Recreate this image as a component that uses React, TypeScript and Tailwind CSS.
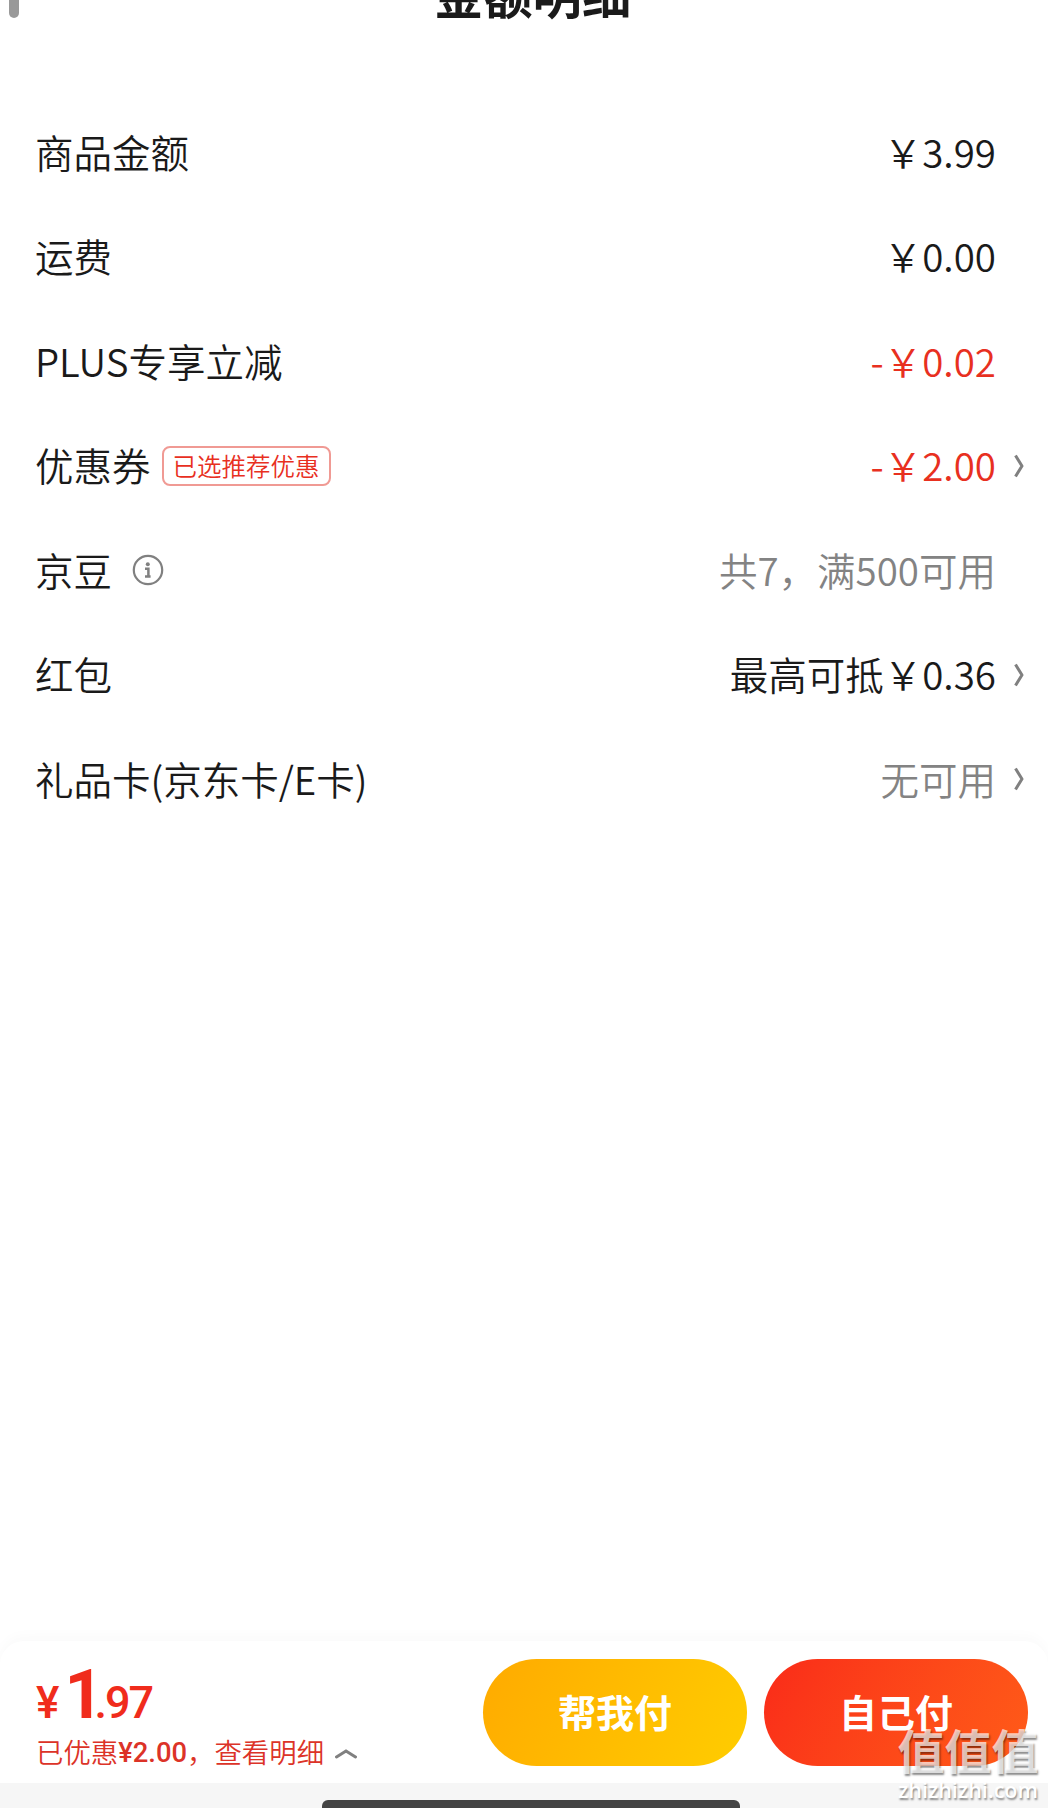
import type { ReactNode } from 'react'

type Row = {
  label: string
  value: string
  tone?: 'dark' | 'red' | 'gray'
  extra?: ReactNode
  arrow?: boolean
}

const tones = {
  dark: 'text-[#1a1a1a]',
  red: 'text-[#e8301f]',
  gray: 'text-[#838383]',
}

// \uFFE5 is the full-width yen sign, \uFF0C the full-width comma
const rows: Row[] = [
  { label: '商品金额', value: '\uFFE53.99' },
  { label: '运费', value: '\uFFE50.00' },
  { label: 'PLUS专享立减', value: '-\uFFE50.02', tone: 'red' },
  { label: '优惠券', value: '-\uFFE52.00', tone: 'red', extra: <CouponTag />, arrow: true },
  { label: '京豆', value: '共7\uFF0C满500可用', tone: 'gray', extra: <InfoIcon /> },
  { label: '红包', value: '最高可抵\uFFE50.36', arrow: true },
  { label: '礼品卡(京东卡/E卡)', value: '无可用', tone: 'gray', arrow: true },
]

function CouponTag() {
  return (
    <span className="ml-[11px] flex h-10 w-[169px] items-center justify-center rounded-lg border-2 border-[#f09a94] text-[24.5px] leading-none text-[#e8301f]">
      已选推荐优惠
    </span>
  )
}

function InfoIcon() {
  return (
    <svg className="ml-5 size-8" viewBox="0 0 32 32" fill="none" stroke="#808080">
      <circle cx="16" cy="16" r="14.2" strokeWidth="2.2" />
      <circle cx="15.8" cy="10.2" r="2" fill="#808080" stroke="none" />
      <path d="M13 14.8h3.4v7.8M13 22.6h5.6" strokeWidth="2.5" />
    </svg>
  )
}

function ArrowRight() {
  return (
    <svg className="h-6 w-3" viewBox="0 0 12 24" fill="none" stroke="#808080" strokeWidth="3">
      <path d="M2.5 1.5l6.5 10.5-6.5 10.5" strokeLinejoin="round" />
    </svg>
  )
}

function DetailRow({ label, value, tone = 'dark', extra, arrow }: Row) {
  return (
    <li className="flex h-[104.5px] items-center text-[38.5px] leading-none font-[350]">
      <span className="pb-[3px] text-[#1a1a1a]">{label}</span>
      {extra}
      <span className={`ml-auto pb-[3px] ${tones[tone]}`}>{value}</span>
      <span className="flex w-[29px] justify-end">{arrow && <ArrowRight />}</span>
    </li>
  )
}

export default function App() {
  return (
    <div className="relative flex h-[1808px] w-[1048px] flex-col overflow-hidden bg-white font-['Noto_Sans_CJK_SC',sans-serif]">
      <header className="flex h-[100px] shrink-0 items-start pl-[9px]">
        <span className="h-[18px] w-2.5 rounded-b-full bg-[#999]" />
        <h1 className="-mt-[32px] ml-[415px] text-[49.3px] font-bold leading-none text-[#1a1a1a]">金额明细</h1>
      </header>

      <ul className="flex-1 pl-[35px] pr-[23px]">
        {rows.map((row) => (
          <DetailRow key={row.label} {...row} />
        ))}
      </ul>

      <footer className="shrink-0">
        <div className="flex h-[142px] rounded-t-3xl bg-white pl-9 pr-5 pt-[18px] shadow-[0_-6px_12px_rgba(0,0,0,0.02)]">
          <div className="w-[447px] text-[#f02c1c]">
            <div className="flex h-[70px] items-baseline font-['Roboto',sans-serif] font-bold">
              <span className="text-[44px] font-medium leading-none">¥</span>
              <span className="ml-[5px] text-[68px] leading-[72px] tracking-[-9px]">1</span>
              <span className="text-[45px] font-medium leading-none tracking-[-2px]">.97</span>
            </div>
            <div className="flex items-center text-[27.4px] leading-[44px] text-[#dc3328]">
              <span className="font-[350]">已优惠</span>
              <span className="pt-1 font-['Roboto',sans-serif] leading-[40px] font-medium">¥2.00</span>
              <span className="font-[350]">{'\uFF0C查看明细'}</span>
              <svg className="mt-1.5 ml-[11px] h-3 w-[22px]" viewBox="0 0 22 12" fill="none" stroke="#808080" strokeWidth="3">
                <path d="M1.5 9l9.5-6 9.5 6" strokeLinecap="round" />
              </svg>
            </div>
          </div>
          <button className="h-[107px] w-[264px] rounded-full bg-linear-120 from-[#ffaa00] to-[#ffcd00] pb-1 text-[38px] font-bold text-white">
            帮我付
          </button>
          <button className="ml-[17px] h-[107px] w-[264px] rounded-full bg-linear-120 from-[#fa2a19] to-[#ff5b18] pb-1 text-[38px] font-bold text-white">
            自己付
          </button>
        </div>
        <div className="flex h-[25px] items-end bg-[#f6f6f6] pl-[322px]">
          <div className="h-2 w-[418px] rounded-t-md bg-[#444]" />
        </div>
      </footer>

      <div className="absolute right-[9px] bottom-2 flex w-[142px] flex-col items-center whitespace-nowrap font-bold leading-none text-white/70 [text-shadow:1px_2px_2px_rgba(0,0,0,0.45)]">
        <span className="text-[47px]">值值值</span>
        <span className="mt-[7px] font-['Open_Sans',sans-serif] text-[21.5px] font-semibold text-white">zhizhizhi.com</span>
      </div>
    </div>
  )
}
